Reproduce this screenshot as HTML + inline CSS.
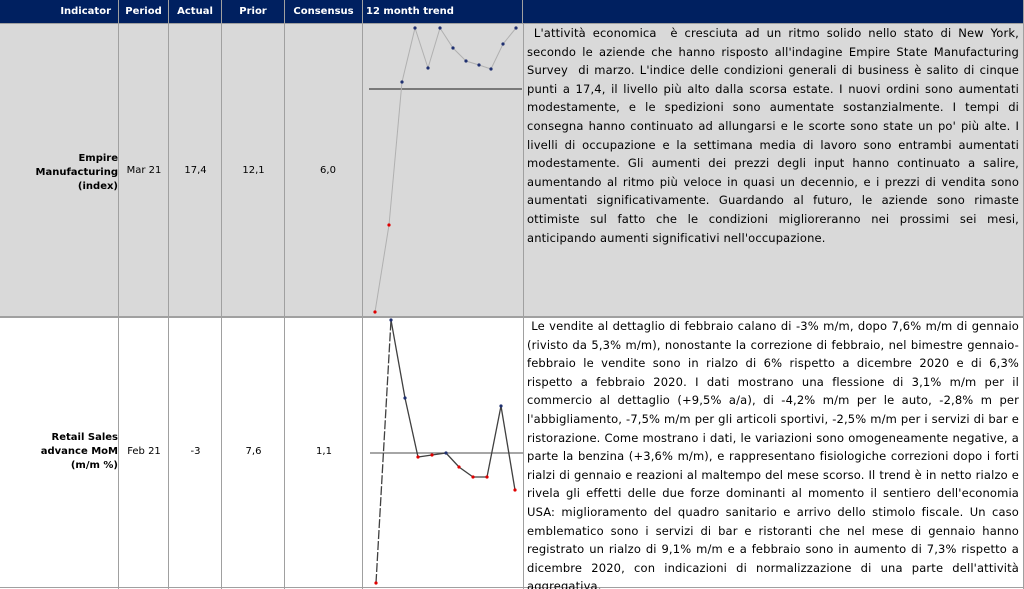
<!DOCTYPE html>
<html><head><meta charset="utf-8"><style>
*{margin:0;padding:0;box-sizing:border-box}
body{width:1024px;height:589px;overflow:hidden;background:#fff;font-family:"DejaVu Sans","Liberation Sans",sans-serif;}
.c{position:absolute;border-right:1px solid #a0a0a0;}
.h{position:absolute;top:0;height:23px;background:#002060;color:#fff;font-weight:bold;font-size:10px;line-height:23px;border-right:1px solid #a0a0a0;}
.v{position:absolute;font-size:10px;color:#000;text-align:center;}
.txt{position:absolute;font-size:11.5px;line-height:18.6px;text-align:justify;color:#000;letter-spacing:0.15px;word-spacing:0px}
</style></head><body>
<div class="h" style="left:0;width:119px;text-align:right;padding-right:7px">Indicator</div>
<div class="h" style="left:119px;width:50px;text-align:center">Period</div>
<div class="h" style="left:169px;width:53px;text-align:center">Actual</div>
<div class="h" style="left:222px;width:63px;text-align:center">Prior</div>
<div class="h" style="left:285px;width:78px;text-align:center">Consensus</div>
<div class="h" style="left:363px;width:160px;padding-left:3px">12 month trend</div>
<div class="h" style="left:523px;width:501px"></div>

<div style="position:absolute;left:0;top:23px;width:1024px;height:294px;background:#d9d9d9;border-top:1px solid #a0a0a0"></div>
<div style="position:absolute;left:0;top:316px;width:1024px;height:2px;background:#a0a0a0"></div>
<div style="position:absolute;left:0;top:587px;width:1024px;height:1px;background:#a0a0a0"></div>
<div class="c" style="left:0;top:23px;width:119px;height:566px"></div>
<div class="c" style="left:119px;top:23px;width:50px;height:566px"></div>
<div class="c" style="left:169px;top:23px;width:53px;height:566px"></div>
<div class="c" style="left:222px;top:23px;width:63px;height:566px"></div>
<div class="c" style="left:285px;top:23px;width:78px;height:566px"></div>
<div class="c" style="left:363px;top:23px;width:161px;height:566px"></div>
<div style="position:absolute;left:1023px;top:23px;width:1px;height:566px;background:#a0a0a0"></div>

<div class="v" style="left:0;width:118px;top:152px;text-align:right;font-weight:bold;line-height:14px">Empire<br>Manufacturing<br>(index)</div>
<div class="v" style="left:119px;width:50px;top:165px">Mar 21</div>
<div class="v" style="left:169px;width:53px;top:165px">17,4</div>
<div class="v" style="left:222px;width:63px;top:165px">12,1</div>
<div class="v" style="left:285px;width:78px;top:165px;padding-left:8px">6,0</div>

<div class="v" style="left:0;width:118px;top:431px;text-align:right;font-weight:bold;line-height:14px">Retail Sales<br>advance MoM<br>(m/m %)</div>
<div class="v" style="left:119px;width:50px;top:446px">Feb 21</div>
<div class="v" style="left:169px;width:53px;top:446px">-3</div>
<div class="v" style="left:222px;width:63px;top:446px">7,6</div>
<div class="v" style="left:285px;width:78px;top:446px">1,1</div>

<svg style="position:absolute;left:0;top:0" width="1024" height="589">
<line x1="369" y1="89" x2="522" y2="89" stroke="#404040" stroke-width="1.2"/>
<polyline fill="none" stroke="#b0b0b0" stroke-width="1" points="375,312 389,225 402,82 415,28 428,68 440,28 453,48 466,61 479,65 491,69 503,44 516,28"/>
<g fill="#1f3070"><circle cx="402" cy="82" r="1.6"/><circle cx="415" cy="28" r="1.6"/><circle cx="428" cy="68" r="1.6"/><circle cx="440" cy="28" r="1.6"/><circle cx="453" cy="48" r="1.6"/><circle cx="466" cy="61" r="1.6"/><circle cx="479" cy="65" r="1.6"/><circle cx="491" cy="69" r="1.6"/><circle cx="503" cy="44" r="1.6"/><circle cx="516" cy="28" r="1.6"/></g>
<g fill="#e00000"><circle cx="375" cy="312" r="1.6"/><circle cx="389" cy="225" r="1.6"/></g>

<line x1="370" y1="453" x2="523" y2="453" stroke="#707070" stroke-width="1.2"/>
<polyline fill="none" stroke="#404040" stroke-width="1.3" stroke-dasharray="9,2" points="376,583 391,320"/>
<polyline fill="none" stroke="#404040" stroke-width="1.3" points="391,320 405,398 418,457 432,455 446,453 459,467 473,477 487,477 501,406 515,490"/>
<g fill="#1f3070"><circle cx="391" cy="320" r="1.6"/><circle cx="405" cy="398" r="1.6"/><circle cx="446" cy="453" r="1.6"/><circle cx="501" cy="406" r="1.6"/></g>
<g fill="#e00000"><circle cx="376" cy="583" r="1.6"/><circle cx="418" cy="457" r="1.6"/><circle cx="432" cy="455" r="1.6"/><circle cx="459" cy="467" r="1.6"/><circle cx="473" cy="477" r="1.6"/><circle cx="487" cy="477" r="1.6"/><circle cx="515" cy="490" r="1.6"/></g>
</svg>

<div class="txt" style="left:527px;top:24px;width:492px">&nbsp;L'attività economica &nbsp;è cresciuta ad un ritmo solido nello stato di New York, secondo le aziende che hanno risposto all'indagine Empire State Manufacturing Survey &nbsp;di marzo. L'indice delle condizioni generali di business è salito di cinque punti a 17,4, il livello più alto dalla scorsa estate. I nuovi ordini sono aumentati modestamente, e le spedizioni sono aumentate sostanzialmente. I tempi di consegna hanno continuato ad allungarsi e le scorte sono state un po' più alte. I livelli di occupazione e la settimana media di lavoro sono entrambi aumentati modestamente. Gli aumenti dei prezzi degli input hanno continuato a salire, aumentando al ritmo più veloce in quasi un decennio, e i prezzi di vendita sono aumentati significativamente. Guardando al futuro, le aziende sono rimaste ottimiste sul fatto che le condizioni miglioreranno nei prossimi sei mesi, anticipando aumenti significativi nell'occupazione.</div>

<div class="txt" style="left:527px;top:317px;width:492px;height:272px;overflow:hidden">&nbsp;Le vendite al dettaglio di febbraio calano di -3% m/m, dopo 7,6% m/m di gennaio (rivisto da 5,3% m/m), nonostante la correzione di febbraio, nel bimestre gennaio-febbraio le vendite sono in rialzo di 6% rispetto a dicembre 2020 e di 6,3% rispetto a febbraio 2020. I dati mostrano una flessione di 3,1% m/m per il commercio al dettaglio (+9,5% a/a), di -4,2% m/m per le auto, -2,8% m per l'abbigliamento, -7,5% m/m per gli articoli sportivi, -2,5% m/m per i servizi di bar e ristorazione. Come mostrano i dati, le variazioni sono omogeneamente negative, a parte la benzina (+3,6% m/m), e rappresentano fisiologiche correzioni dopo i forti rialzi di gennaio e reazioni al maltempo del mese scorso. Il trend è in netto rialzo e rivela gli effetti delle due forze dominanti al momento il sentiero dell'economia USA: miglioramento del quadro sanitario e arrivo dello stimolo fiscale. Un caso emblematico sono i servizi di bar e ristoranti che nel mese di gennaio hanno registrato un rialzo di 9,1% m/m e a febbraio sono in aumento di 7,3% rispetto a dicembre 2020, con indicazioni di normalizzazione di una parte dell'attività aggregativa.</div>
</body></html>
